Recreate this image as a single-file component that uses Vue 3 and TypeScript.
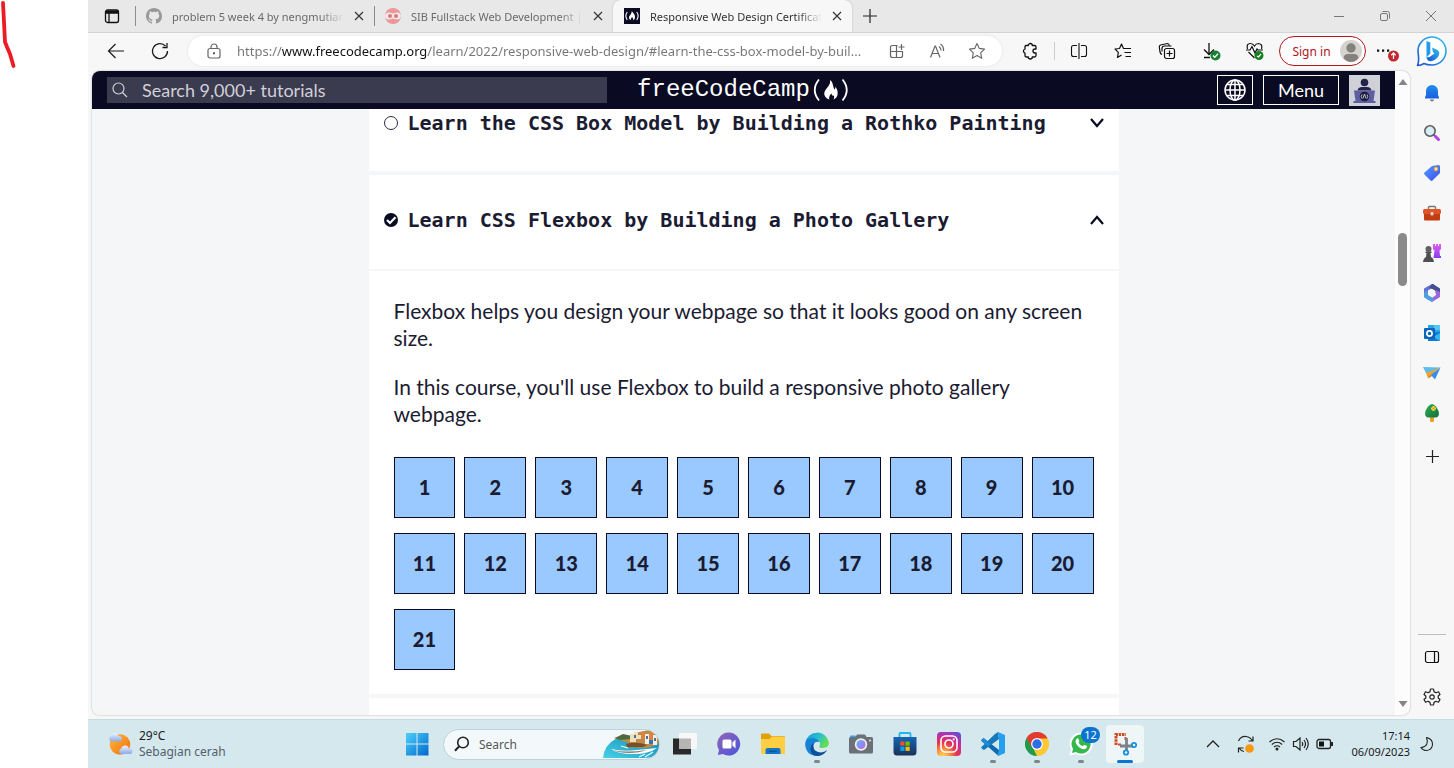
<script setup lang="ts">
import { ref } from 'vue'

interface Tab {
  title: string
  icon: 'github' | 'sib' | 'fcc'
}

const tabs: Tab[] = [
  { title: 'problem 5 week 4 by nengmutiar', icon: 'github' },
  { title: 'SIB Fullstack Web Development |', icon: 'sib' },
  { title: 'Responsive Web Design Certificat', icon: 'fcc' },
]
const activeTab = ref(2)
const address = ref(
  'https://www.freecodecamp.org/learn/2022/responsive-web-design/#learn-the-css-box-model-by-buil...',
)
const query = ref('')
const taskQuery = ref('')
const steps: number[] = Array.from({ length: 21 }, (_, i) => i + 1)
</script>

<template>
  <div class="desktop">
    <div class="canvas" aria-hidden="true">
      <svg width="20" height="72" viewBox="0 0 20 72" fill="none" stroke="#ed1c24" stroke-width="3.8" stroke-linecap="round" stroke-linejoin="round">
        <path d="M3 3L4 22L5 42L7 47L10 54L13.500 66" />
      </svg>
    </div>

    <div class="screen">
      <div class="tabbar">
        <button class="workspaces" aria-label="Tab actions">
          <svg width="16" height="16" viewBox="0 0 16 16" fill="none" stroke="#111" stroke-width="1.3">
            <rect x="1.500" y="2" width="13" height="12.500" rx="2" />
            <path d="M2 3.700H14M2 4.500H14" stroke-width="2.400" />
            <path d="M5 5V14" />
          </svg>
        </button>
        <div v-for="(tab, i) in tabs" :key="tab.title" class="tab" :class="{ active: i === activeTab }">
          <button class="tab-main" @click="activeTab = i">
            <svg v-if="tab.icon === 'github'" width="16" height="16" viewBox="0 0 16 16" fill="#999">
              <path d="M8 0C3.580 0 0 3.580 0 8c0 3.540 2.290 6.530 5.470 7.590.4.070.55-.17.55-.38v-1.490c-2.010.37-2.530-.49-2.690-.94-.09-.23-.48-.94-.82-1.130-.28-.15-.68-.52-.01-.53.63-.01 1.080.58 1.230.82.72 1.210 1.870.87 2.330.66.07-.52.28-.87.51-1.070-1.780-.2-3.640-.89-3.640-3.950 0-.87.31-1.590.82-2.150-.08-.2-.36-1.020.08-2.120 0 0 .67-.21 2.200.82a7.600 7.600 0 0 1 4 0c1.530-1.040 2.200-.82 2.200-.82.44 1.100.16 1.920.08 2.120.51.56.82 1.270.82 2.150 0 3.070-1.870 3.750-3.650 3.950.29.25.54.73.54 1.480v2.200c0 .21.15.46.55.38A8 8 0 0 0 16 8c0-4.420-3.580-8-8-8z" />
            </svg>
            <svg v-else-if="tab.icon === 'sib'" width="16" height="16" viewBox="0 0 16 16">
              <circle cx="8" cy="8" r="8" fill="#e9979a" />
              <path d="M0 8a4 4 0 0 1 4-3.600c2.400 0 2.600 1 4 1s1.600-1 4-1a4 4 0 0 1 4 3.600a4 4 0 0 1-4 3.600c-2.400 0-2.600-1-4-1s-1.600 1-4 1A4 4 0 0 1 0 8z" fill="#f6e8e8" />
              <circle cx="5" cy="8" r="2" fill="#dd777b" />
              <circle cx="11" cy="8" r="2" fill="#dd777b" />
            </svg>
            <svg v-else width="16" height="16" viewBox="0 0 16 16">
              <rect width="16" height="16" fill="#0a0a23" />
              <path d="M3.300 4Q.4 8 3.300 12M12.700 4Q15.600 8 12.700 12" fill="none" stroke="#fff" stroke-width="1.100" />
              <path d="M7.800 3C9 5 11.200 6.500 11 9.200C10.900 11 10.200 11.800 9.200 12.300C9.600 11 9 9.800 8 9.300C7.300 10 6.500 11 7 12.300C5.300 11.700 4.600 10.200 5.200 8.600C5.800 7 8 5.800 7.800 3Z" fill="#fff" />
            </svg>
            <span class="tab-title">{{ tab.title }}</span>
          </button>
          <button class="tab-close" aria-label="Close tab">
            <svg width="10" height="10" viewBox="0 0 10 10" stroke="#333" stroke-width="1.200"><path d="M1 1L9 9M9 1L1 9" /></svg>
          </button>
        </div>
        <button class="new-tab" aria-label="New tab">
          <svg width="14" height="14" viewBox="0 0 14 14" stroke="#222" stroke-width="1.200"><path d="M7 0V14M0 7H14" /></svg>
        </button>
        <div class="window-controls">
          <button aria-label="Minimize"><svg width="12" height="12" viewBox="0 0 12 12" stroke="#777"><path d="M1 6.500H11" /></svg></button>
          <button aria-label="Restore">
            <svg width="12" height="12" viewBox="0 0 12 12" fill="none" stroke="#777">
              <rect x="1.500" y="3.500" width="7" height="7" rx="1.500" /><path d="M3.500 1.500H8.500Q10.500 1.500 10.500 3.500V8.500" />
            </svg>
          </button>
          <button aria-label="Close"><svg width="12" height="12" viewBox="0 0 12 12" stroke="#777"><path d="M1 1L11 11M11 1L1 11" /></svg></button>
        </div>
      </div>

      <div class="toolbar">
        <button class="tool" aria-label="Back">
          <svg width="18" height="18" viewBox="0 0 18 18" fill="none" stroke="#1b1b1b" stroke-width="1.200"><path d="M17 9H1.500M8.500 2L1.500 9L8.500 16" /></svg>
        </button>
        <button class="tool" aria-label="Reload">
          <svg width="18" height="18" viewBox="0 0 18 18" fill="none" stroke="#1b1b1b" stroke-width="1.300"><path d="M16.500 9A7.500 7.500 0 1 1 14.500 4M16 1V5.500H11.500" /></svg>
        </button>
        <div class="address">
          <svg class="lock" width="14" height="16" viewBox="0 0 14 16" fill="none" stroke="#666" stroke-width="1.200">
            <rect x="1" y="5.500" width="12" height="9.500" rx="2" /><path d="M4 5.500V4A3 3 0 0 1 10 4V5.500" /><circle cx="7" cy="10.300" r=".6" fill="#666" />
          </svg>
          <input v-model="address" class="url" type="text" aria-label="Address" />
          <button class="tool" aria-label="App available">
            <svg width="16" height="16" viewBox="0 0 16 16" fill="none" stroke="#666" stroke-width="1.200">
              <path d="M8.500 2.500H3.500Q1.500 2.500 1.500 4.500V12.500Q1.500 14.500 3.500 14.500H11.500Q13.500 14.500 13.500 12.500V8.500H1.500M7.500 2.500V14.500M12.500 1V7M9.500 4H15.500" />
            </svg>
          </button>
          <button class="tool" aria-label="Read aloud">
            <svg width="18" height="16" viewBox="0 0 18 16" fill="none" stroke="#666" stroke-width="1.200">
              <path d="M2.500 14.500L7 3H7.500L12 14.500M4 10.500H10.500M11 3.500Q13 5 13 7.500M12.500 1Q16 3.500 15.500 8" />
            </svg>
          </button>
          <button class="tool" aria-label="Add to favorites">
            <svg width="18" height="18" viewBox="0 0 18 18" fill="none" stroke="#666" stroke-width="1.100" stroke-linejoin="round">
              <path d="M9 1.500L11.300 6.400L16.500 7.100L12.700 10.800L13.700 16.200L9 13.600L4.300 16.200L5.300 10.800L1.500 7.100L6.700 6.400Z" />
            </svg>
          </button>
        </div>
        <button class="tool" aria-label="Extensions">
          <svg width="18" height="18" viewBox="0 0 18 18" fill="none" stroke="#111" stroke-width="1.300" stroke-linejoin="round">
            <path d="M5 3.500H7.300A2 2 0 0 1 11.300 3.500H13.500Q15 3.500 15 5V7H14A2 2 0 0 0 14 11H15V13.500Q15 15 13.500 15H11.300A2 2 0 0 1 7.300 15H5.500Q4 15 4 13.500V11.200A2.200 2.200 0 0 1 4 7V5Q4 3.500 5 3.500Z" />
          </svg>
        </button>
        <span class="tool-divider"></span>
        <button class="tool" aria-label="Split screen">
          <svg width="18" height="16" viewBox="0 0 18 16" fill="none" stroke="#111" stroke-width="1.100">
            <path d="M7 2.500H3.500Q1.500 2.500 1.500 4.500V11.500Q1.500 13.500 3.500 13.500H7M11 2.500H14.500Q16.500 2.500 16.500 4.500V11.500Q16.500 13.500 14.500 13.500H11M9 0V16" />
          </svg>
        </button>
        <button class="tool" aria-label="Favorites">
          <svg width="18" height="18" viewBox="0 0 18 18" fill="none" stroke="#111" stroke-width="1.200" stroke-linejoin="round">
            <path d="M12.500 6.500H9.500L7.500 2L5.500 6.500L1 7L4.300 10.300L3.500 15.500L7.500 13M11 6.500H17M10.500 10.500H17M11.500 14.500H17" />
          </svg>
        </button>
        <button class="tool" aria-label="Collections">
          <svg width="18" height="18" viewBox="0 0 18 18" fill="none" stroke="#111" stroke-width="1.200">
            <rect x="6.500" y="6.500" width="10" height="10" rx="2" /><path d="M11.500 8.500V14.500M8.500 11.500H14.500M4 12.500Q2.500 12 2 10L1.300 5Q1.200 3.500 2.500 3L9.500 1.500Q11 1.500 11.500 4M4 9.500V6.500Q4 4 6.500 4H13.500" />
          </svg>
        </button>
        <button class="tool" aria-label="Downloads">
          <svg width="20" height="20" viewBox="0 0 20 20" fill="none" stroke="#111" stroke-width="1.300">
            <path d="M8 2V13M3 8.500L8 13.500L13 8.500M3 16.500H9" /><circle cx="14.500" cy="14.500" r="5" fill="#1a7f37" stroke="none" /><path d="M12 14.500L13.800 16.300L17 12.800" stroke="#fff" />
          </svg>
        </button>
        <button class="tool" aria-label="Browser essentials">
          <svg width="20" height="20" viewBox="0 0 20 20" fill="none" stroke="#111" stroke-width="1.200">
            <path d="M2.500 8Q1 2.500 5.500 2.500Q8 2.500 9.500 5Q11 2.500 13.500 2.500Q18 3 16.500 8M1 9H5L7 5.500L10 12L12 8L13 9H18M3.500 11L9.500 17" />
            <circle cx="14" cy="14.500" r="4.500" fill="#168020" stroke="none" /><path d="M12 15L13.500 16L16 13" stroke="#fff" />
          </svg>
        </button>
        <button class="sign-in">
          <span>Sign in</span>
          <svg width="22" height="22" viewBox="0 0 22 22">
            <circle cx="11" cy="11" r="11" fill="#d5d3cf" /><circle cx="11" cy="8" r="4.700" fill="#85827e" /><path d="M3.500 18Q4 14 8 14H14Q18 14 18.500 18Q15.500 22 11 22T3.500 18Z" fill="#85827e" />
          </svg>
        </button>
        <button class="tool" aria-label="Settings and more">
          <svg width="22" height="22" viewBox="0 0 22 22">
            <path d="M0 9.500h2.200v2.200H0zM5 9.500h2.200v2.200H5zM10 9.500h2.200v2.200H10z" fill="#111" /><circle cx="16.500" cy="16" r="5.500" fill="#c4262e" /><path d="M16.500 19V13.300M14.300 15.300L16.500 13L18.700 15.300" fill="none" stroke="#fff" stroke-width="1.300" />
          </svg>
        </button>
        <button class="tool" aria-label="Discover">
          <svg width="32" height="32" viewBox="0 0 32 32">
            <defs><linearGradient id="bing" x1="0" y1="1" x2="1" y2="0"><stop offset="0" stop-color="#1b4fd0" /><stop offset="1" stop-color="#2fc4ee" /></linearGradient></defs>
            <path d="M1.500 30.500Q3.500 26 2 17A14 14 0 1 1 16 30Q11 30 8 28.500Q5 30.500 1.500 30.500Z" fill="#fff" stroke="url(#bing)" stroke-width="1.600" stroke-linejoin="round" />
            <path d="M10.500 6L14.300 7.500V18.500L10.500 22.500Z" fill="#1e9bea" />
            <path d="M16 12.500L21.500 15Q24 16.500 23 20Q21.500 24 16 26Q11 27 10.500 22Q13 23 17 19.500L18.500 18.500L17 17Z" fill="url(#bing)" />
          </svg>
        </button>
      </div>

      <div class="browser-body">
        <div class="viewport">
          <main class="page">
            <header class="site-header">
              <label class="site-search">
                <svg width="16" height="16" viewBox="0 0 16 16" fill="none" stroke="#d0d0d5" stroke-width="1.200"><circle cx="6.500" cy="6.500" r="5.500" /><path d="M10.500 10.500L15 15" /></svg>
                <input v-model="query" type="text" placeholder="Search 9,000+ tutorials" aria-label="Search 9,000+ tutorials" />
              </label>
              <a class="logo" href="#learn" aria-label="freeCodeCamp">
                <span>freeCodeCamp</span>
                <svg width="40" height="26" viewBox="0 0 40 26">
                  <path d="M9 2.500Q.5 13 9 23.500M32.500 2.500Q41 13 32.500 23.500" fill="none" stroke="#fff" stroke-width="1.800" />
                  <path d="M20 3C23.500 5.500 22.500 9 24.500 12.500C25.300 11.800 25.500 10.500 25 9.500C27.500 12 28 15 27.500 18C27 20 25.500 22 23.500 22.500C24.500 20.500 24.300 18.500 23 18.500C22 18.800 21.800 18 21.500 16.500C20 17.500 18.500 20 19.300 22.500C16 21.500 13.500 18.500 14.500 15C15.500 11.500 21 8.500 20 3Z" fill="#fff" />
                </svg>
              </a>
              <div class="site-actions">
                <button class="globe" aria-label="Change language">
                  <svg width="22" height="22" viewBox="0 0 22 22" fill="none" stroke="#fff" stroke-width="1.500"><circle cx="11" cy="11" r="10" /><ellipse cx="11" cy="11" rx="5" ry="10" /><path d="M11 1V21M1 11H21M3 5.500H19M3 16.500H19" /></svg>
                </button>
                <button class="menu">Menu</button>
                <a href="#profile" class="avatar" aria-label="Profile">
                  <svg width="31" height="31" viewBox="0 0 31 31">
                    <rect width="31" height="31" fill="#d0d0d8" /><circle cx="15.500" cy="7.500" r="3.800" fill="#24244a" /><path d="M8.500 15.500Q9 12 13 12H18Q22 12 22.500 15.500Z" fill="#24244a" /><path d="M5 15.500H26L24.500 26H26.500V28H4.500V26H6.500Z" fill="#5e5ea2" /><circle cx="15.500" cy="21.500" r="4.800" fill="#1c1c3c" /><path d="M13 19.500Q11.500 21.500 13 23.500M18 19.500Q19.500 21.500 18 23.500M15.500 19L14 23.500M15.500 19L17 23.500" fill="none" stroke="#d0d0d8" stroke-width=".9" />
                  </svg>
                </a>
              </div>
            </header>

            <div class="curriculum">
              <section class="block">
                <h3>
                  <button class="block-toggle cut">
                    <svg width="14" height="14" viewBox="0 0 14 14" fill="#fff" stroke="#2a2a40"><circle cx="7" cy="7" r="6.500" /></svg>
                    <span>Learn the CSS Box Model by Building a Rothko Painting</span>
                    <svg width="14" height="10" viewBox="0 0 14 10" fill="none" stroke="#0a0a23" stroke-width="2.200"><path d="M1 1L7 8L13 1" /></svg>
                  </button>
                </h3>
              </section>
              <section class="block">
                <h3>
                  <button class="block-toggle" aria-expanded="true">
                    <svg width="14" height="14" viewBox="0 0 14 14"><circle cx="7" cy="7" r="7" fill="#0a0a23" /><path d="M3 7L6 10L11.500 4.300" fill="none" stroke="#fff" stroke-width="2.200" /></svg>
                    <span>Learn CSS Flexbox by Building a Photo Gallery</span>
                    <svg width="14" height="10" viewBox="0 0 14 10" fill="none" stroke="#0a0a23" stroke-width="2.200"><path d="M1 9L7 2L13 9" /></svg>
                  </button>
                </h3>
                <div class="block-body">
                  <p>Flexbox helps you design your webpage so that it looks good on any screen size.</p>
                  <p>In this course, you'll use Flexbox to build a responsive photo gallery webpage.</p>
                  <nav class="steps" aria-label="Steps">
                    <a v-for="n in steps" :key="n" :href="`#step-${n}`">{{ n }}</a>
                  </nav>
                </div>
              </section>
              <section class="block rest"></section>
            </div>
          </main>
          <div class="scrollbar" aria-hidden="true">
            <svg width="10" height="8" viewBox="0 0 10 8" fill="#858585"><path d="M5 1L9.500 7H.5Z" /></svg>
            <span class="track"><span class="thumb"></span></span>
            <svg width="10" height="8" viewBox="0 0 10 8" fill="#858585"><path d="M5 7L9.500 1H.5Z" /></svg>
          </div>
        </div>

        <aside class="sidebar">
          <svg width="0" height="0" class="defs" aria-hidden="true">
            <defs>
              <linearGradient id="tag" x1="0" y1="0" x2="1" y2="1"><stop offset="0" stop-color="#4fa0ff" /><stop offset="1" stop-color="#3f4cf0" /></linearGradient>
              <linearGradient id="rook" x1="0" y1="0" x2="0" y2="1"><stop offset="0" stop-color="#e05cf5" /><stop offset="1" stop-color="#8b3df0" /></linearGradient>
              <linearGradient id="belly" x1="0" y1="0" x2="0" y2="1"><stop offset="0" stop-color="#1f8fea" /><stop offset="1" stop-color="#1c5ee0" /></linearGradient>
              <linearGradient id="tree" x1="0" y1="0" x2="1" y2="1"><stop offset="0" stop-color="#2fae4c" /><stop offset="1" stop-color="#0d7040" /></linearGradient>
            </defs>
          </svg>
          <button aria-label="Notifications">
            <svg width="18" height="18" viewBox="0 0 18 18"><path d="M7 15.500H11Q11 17.500 9 17.500T7 15.500Z" fill="#777" /><path d="M9 1A6 6 0 0 1 15 7V11L16 13.500V14.500H2V13.500L3 11V7A6 6 0 0 1 9 1Z" fill="url(#belly)" /></svg>
          </button>
          <button aria-label="Search">
            <svg width="18" height="18" viewBox="0 0 18 18"><path d="M10.500 10.500L12.500 12.500" stroke="#666" stroke-width="2" /><path d="M12.500 12.500L15.500 15.500" stroke="#b83df0" stroke-width="3" stroke-linecap="round" /><circle cx="7" cy="7" r="5.200" fill="#d4eefa" stroke="#5e5e5e" stroke-width="1.600" /></svg>
          </button>
          <button aria-label="Shopping">
            <svg width="18" height="18" viewBox="0 0 18 18"><path d="M9 2L15.500 1Q17 1 17 2.500V9L9.500 16.500Q8.500 17.300 7.500 16.500L1.500 10.500Q.7 9.500 1.500 8.500Z" fill="url(#tag)" /><circle cx="13" cy="5" r="1.900" fill="#ffe79a" stroke="#e5a72c" /></svg>
          </button>
          <button aria-label="Tools">
            <svg width="20" height="18" viewBox="0 0 20 18"><path d="M6.500 5V3.500Q6.500 2.500 7.500 2.500H12.500Q13.500 2.500 13.500 3.500V5" fill="none" stroke="#777" stroke-width="1.400" /><rect x="2" y="8" width="16" height="8.500" rx="1" fill="#c13c12" /><rect x="1" y="5" width="18" height="5" rx="1.500" fill="#df5420" /><rect x="8.500" y="8" width="3" height="3.500" rx="1" fill="#d3d3d3" /></svg>
          </button>
          <button aria-label="Games">
            <svg width="20" height="20" viewBox="0 0 20 20"><path d="M11 1H13V3H14V1H16V3H17V1H19V6L17.500 7.500L18 13H19V15H11.500L12.500 7.500L11 6Z" fill="url(#rook)" /><circle cx="6.500" cy="6" r="3" fill="#606060" /><path d="M3.500 8.500H9.500V10H8.500L9 14Q11.500 15 12 19H1Q1.500 15 4 14L4.500 10H3.500Z" fill="#505050" /></svg>
          </button>
          <button aria-label="Microsoft 365">
            <svg width="18" height="18" viewBox="0 0 18 18"><path d="M9 0L1 4.500V13L5 15.500V6.500L11 3V0Z" fill="#6570d8" /><path d="M10 0L17 4.500V12L12 9V6.500L6 3.500L9 0Z" fill="#435091" /><path d="M17 8V13L9 18L3 14.500L9 14L13 11V6L17 8Z" fill="#9e65dc" /><path d="M1 9V13L9 18L11 14.500L5 11V6Z" fill="#48a0dc" /><path d="M9 5L12.500 7V11L9 13L5.500 11V7Z" fill="#f7f7f7" /></svg>
          </button>
          <button aria-label="Outlook">
            <svg width="18" height="18" viewBox="0 0 18 18"><path d="M5 1H17V12H5Z" fill="#29a5ea" /><path d="M11 1H17V6H11Z" fill="#56c6f4" /><path d="M5 9L17 8V16Q17 17 16 17H5Z" fill="#1376d1" /><path d="M17 9V17L10 13Z" fill="#35b8f1" /><rect x="1" y="4" width="11" height="11" rx="1" fill="#0867bd" /><circle cx="6.500" cy="9.500" r="2.600" fill="none" stroke="#fff" stroke-width="1.700" /></svg>
          </button>
          <button aria-label="Drop">
            <svg width="18" height="18" viewBox="0 0 18 18"><path d="M0 3L17.500 3.500L7 9.500L3 9Z" fill="#5dbbed" /><path d="M17.500 3.500L12 15.500L7.500 10.500Z" fill="#3a8cee" /><path d="M3 9L17.500 3.500L7 11L5 14.500Z" fill="#f0a52a" /><path d="M5 14.500L7 10.500L9 12Z" fill="#c87b11" /></svg>
          </button>
          <button aria-label="Rewards tree">
            <svg width="18" height="20" viewBox="0 0 18 20"><rect x="7" y="13" width="4" height="6" rx="1" fill="#eda029" /><path d="M9 1Q13 2 15.500 8Q17 13 13.500 14.500H4.500Q1 13 2.500 8Q5 2 9 1Z" fill="url(#tree)" /><path d="M10.500 3V8M8 5.500H13" stroke="#ffd23b" stroke-width="2.200" fill="none" /><circle cx="10.500" cy="5.500" r=".8" fill="#d98a16" /></svg>
          </button>
          <button aria-label="Customize" class="add">
            <svg width="13" height="13" viewBox="0 0 13 13" stroke="#222" stroke-width="1.200"><path d="M6.500 0V13M0 6.500H13" /></svg>
          </button>
          <div class="sidebar-foot">
            <button aria-label="Hide sidebar">
              <svg width="16" height="16" viewBox="0 0 16 16" fill="none" stroke="#111" stroke-width="1.200"><rect x="1.500" y="2.500" width="13" height="11" rx="2" /><path d="M10.500 2.500V13.500" /></svg>
            </button>
            <button aria-label="Settings">
              <svg width="18" height="18" viewBox="0 0 18 18" fill="none" stroke="#222" stroke-width="1.200" stroke-linejoin="round"><path d="M7.500 1H10.500L11 3.600L13 4.700L15.500 3.800L17 6.500L15.200 8V10L17 11.500L15.500 14.200L13 13.300L11 14.400L10.500 17H7.500L7 14.400L5 13.300L2.500 14.200L1 11.500L2.800 10V8L1 6.500L2.500 3.800L5 4.700L7 3.600Z" /><circle cx="9" cy="9" r="2.200" /></svg>
            </button>
          </div>
        </aside>
      </div>

      <footer class="taskbar">
        <button class="weather">
          <svg width="26" height="26" viewBox="0 0 26 26">
            <defs>
              <linearGradient id="sun" x1="0" y1="0" x2="1" y2="1"><stop offset="0" stop-color="#ffbd35" /><stop offset="1" stop-color="#f26a12" /></linearGradient>
              <linearGradient id="cloud" x1="0" y1="0" x2="0" y2="1"><stop offset="0" stop-color="#eef4ff" /><stop offset="1" stop-color="#8fa9e4" /></linearGradient>
            </defs>
            <circle cx="13" cy="13.500" r="10.300" fill="url(#sun)" />
            <path d="M4 10.500A3 3 0 0 1 4 5Q5 1.500 8.500 2Q11 2.500 11.500 5Q15 5 15 8Q15 10.500 12.500 10.500Z" fill="url(#cloud)" />
            <path d="M14 23A3 3 0 0 1 14 17.500Q15.500 14 19 14.500Q21.500 15 22 17.500Q25.500 17.500 25.500 20.300Q25.500 23 23 23Z" fill="url(#cloud)" />
          </svg>
          <span class="weather-text"><span>29°C</span><span class="dim">Sebagian cerah</span></span>
        </button>

        <div class="apps">
          <button class="app" aria-label="Start">
            <svg width="24" height="24" viewBox="0 0 24 24"><defs><linearGradient id="win" x1="0" y1="0" x2="1" y2="1"><stop offset="0" stop-color="#4dd0fb" /><stop offset="1" stop-color="#0068cc" /></linearGradient></defs><path d="M1 1H11.500V11.500H1ZM12.500 1H23.500V11.500H12.500ZM1 12.500H11.500V23.500H1ZM12.500 12.500H23.500V23.500H12.500Z" fill="url(#win)" /></svg>
          </button>
          <label class="task-search">
            <svg width="16" height="16" viewBox="0 0 16 16" fill="none" stroke="#222" stroke-width="1.600"><circle cx="9" cy="6.500" r="5.300" /><path d="M5 10.500L1 14.700" stroke-width="2" /></svg>
            <input v-model="taskQuery" type="text" placeholder="Search" aria-label="Search Windows" />
            <svg width="56" height="29" viewBox="0 0 56 29">
              <defs><linearGradient id="sea" x1="0" y1="1" x2="1" y2="0"><stop offset="0" stop-color="#45d2ea" /><stop offset="1" stop-color="#1485ad" /></linearGradient></defs>
              <path d="M0 28Q1 15 14 8L24 6L56 10V18Q54 28 42 28Z" fill="url(#sea)" />
              <path d="M11 8L20 5L28 6L36 2L46 0Q56 4 56 14L44 18L22 17L26 13Z" fill="#b98c4a" />
              <path d="M12 8L20 4L29 6L27 9L17 10Z" fill="#4c6a3b" />
              <path d="M27 4H31V2H35V5H38V9H33V12H27Z" fill="#f0dfb8" /><path d="M38 2H42V8H38ZM46 3H50V9H46Z" fill="#e0803f" /><path d="M42 4H46V14H42ZM50 5H54V15H50Z" fill="#f4efe4" /><path d="M31 5H33V8H31ZM43 6H45V9H43ZM51 8H53V11H51ZM46 10H50V14H46Z" fill="#426fa6" />
              <path d="M23 14Q34 11 44 15L40 17L24 17Z" fill="#7b4e27" />
              <path d="M8 19Q20 22 34 20L54 18Q46 24 30 24Q14 24 8 19Z" fill="#fff" />
              <path d="M10 20Q22 23 44 20Q36 23 26 23Q16 23 10 20Z" fill="#8f7d68" />
              <path d="M36 27L42 24M42 27L50 22M18 16L25 18" stroke="#e5ffff" stroke-width="1.200" />
            </svg>
          </label>
          <button class="app" aria-label="Task view">
            <svg width="24" height="24" viewBox="0 0 24 24"><rect x="0" y="6.500" width="18" height="16" fill="#292929" /><rect x="6" y="1" width="18" height="16" rx="1" fill="#f7f7f7" /><rect x="6" y="6.500" width="12" height="10.500" fill="#b5b5b5" /></svg>
          </button>
          <button class="app" aria-label="Chat">
            <svg width="24" height="24" viewBox="0 0 24 24"><defs><linearGradient id="chat" x1="0" y1="0" x2="1" y2="1"><stop offset="0" stop-color="#9264b6" /><stop offset="1" stop-color="#4a54dc" /></linearGradient></defs><path d="M12 .5A11.500 11.500 0 1 1 6 22L.8 23L2 18A11.500 11.500 0 0 1 12 .5Z" fill="url(#chat)" /><rect x="5.500" y="7.500" width="9" height="9" rx="1.500" fill="#fff" /><path d="M15.500 10.500L18.500 7.500V16.500L15.500 13.500Z" fill="#fff" /></svg>
          </button>
          <button class="app" aria-label="File Explorer">
            <svg width="24" height="24" viewBox="0 0 24 24"><path d="M0 2.500Q0 1.500 1 1.500H8L10.500 4H23Q24 4 24 5V12H0Z" fill="#e0a006" /><path d="M0 7H8.500L11 4.500H23Q24 4.500 24 5.500V22H1Q0 22 0 21Z" fill="#ffce42" /><path d="M4.500 22V18Q4.500 16 6.500 16H17.500Q19.500 16 19.500 18V22Z" fill="#1474c5" /><path d="M8 18.700H16V19.800H8Z" fill="#0a4d91" /></svg>
          </button>
          <button class="app running" aria-label="Edge">
            <svg width="24" height="24" viewBox="0 0 24 24"><defs><linearGradient id="edgeA" x1="0" y1="0" x2="1" y2=".5"><stop offset="0" stop-color="#1597e0" /><stop offset=".6" stop-color="#2bc3c6" /><stop offset="1" stop-color="#66de54" /></linearGradient></defs><path d="M.2 11A12 12 0 0 1 23.800 10Q24.500 16 18 16Q14 16 14.200 14.500Q16 12 14 9Q9 4 .2 11Z" fill="url(#edgeA)" /><path d="M.1 12Q1 5.500 8 6Q13 6.500 14.500 10Q10 8.500 8.500 13Q7.500 19 13.500 23.800Q1 24.500 .1 12Z" fill="#1882d6" /><path d="M8.500 11Q7 18 13 20Q18 21.500 22.200 18Q18.500 24 12 24Q5 23 5.500 16Q6 12.500 8.500 11Z" fill="#0c4f9a" /></svg>
          </button>
          <button class="app" aria-label="Camera">
            <svg width="24" height="24" viewBox="0 0 24 24"><defs><linearGradient id="lens" x1="0" y1="0" x2="1" y2="1"><stop offset="0" stop-color="#57bdfa" /><stop offset="1" stop-color="#c25fe9" /></linearGradient></defs><rect x="1" y="3.500" width="6" height="4" rx="1" fill="#27a9ec" /><path d="M6.500 5L8 2.500H16L17.500 5H22.500Q24 5 24 6.500V20Q24 21.500 22.500 21.500H1.500Q0 21.500 0 20V6.500Q0 5 1.500 5Z" fill="#6b7076" /><circle cx="12" cy="12.500" r="6.200" fill="#eee" /><circle cx="12" cy="12.500" r="4.500" fill="url(#lens)" /><circle cx="21" cy="8.500" r="1.100" fill="#ddd" /></svg>
          </button>
          <button class="app" aria-label="Microsoft Store">
            <svg width="24" height="24" viewBox="0 0 24 24"><defs><linearGradient id="store" x1="0" y1="0" x2="0" y2="1"><stop offset="0" stop-color="#1466b8" /><stop offset="1" stop-color="#1b3158" /></linearGradient></defs><path d="M6.500 6V2Q6.500 1 7.500 1H16.500Q17.500 1 17.500 2V6" fill="none" stroke="#23b5ee" stroke-width="1.800" /><path d="M.5 5H23.500V20Q23.500 23.500 20 23.500H4Q.5 23.500 .5 20Z" fill="url(#store)" /><path d="M7.300 9.500H11.500V13.700H7.300Z" fill="#f25022" /><path d="M12.500 9.500H16.700V13.700H12.500Z" fill="#7fba00" /><path d="M7.300 14.700H11.500V18.900H7.300Z" fill="#00a4ef" /><path d="M12.500 14.700H16.700V18.900H12.500Z" fill="#ffb900" /></svg>
          </button>
          <button class="app" aria-label="Instagram">
            <svg width="24" height="24" viewBox="0 0 24 24"><defs><radialGradient id="insta" cx=".25" cy="1" r="1.150"><stop offset="0" stop-color="#ffd35c" /><stop offset=".25" stop-color="#fb923a" /><stop offset=".5" stop-color="#e8334f" /><stop offset=".75" stop-color="#c22fa3" /><stop offset="1" stop-color="#5b4fd6" /></radialGradient></defs><rect width="24" height="24" rx="4" fill="url(#insta)" /><rect x="4" y="4" width="16" height="16" rx="4.500" fill="none" stroke="#fff" stroke-width="1.600" /><circle cx="12" cy="12" r="4" fill="none" stroke="#fff" stroke-width="1.700" /><circle cx="16.700" cy="7.300" r="1.100" fill="#fff" /></svg>
          </button>
          <button class="app running" aria-label="Visual Studio Code">
            <svg width="24" height="24" viewBox="0 0 24 24"><path d="M17 0L18 7L3 18Q1.500 17.500 .5 16L0 15.500L14 2Z" fill="#1479bd" /><path d="M0 8.500L2.500 6L18 18L17.500 24Z" fill="#0f6aad" /><path d="M0 8.500L2.500 6L10 12L7 15Z" fill="#1d8cd0" /><path d="M17 0L24 3V21L17.500 24L16.500 22.500L18 20V4L16.500 1.500Z" fill="#25a0f0" /></svg>
          </button>
          <button class="app running" aria-label="Chrome">
            <svg width="24" height="24" viewBox="0 0 24 24"><path d="M12 12L1.600 6A12 12 0 0 1 22.400 6Z" fill="#e33b2e" /><path d="M12 12L22.400 6A12 12 0 0 1 12 24Z" fill="#fcc934" /><path d="M12 12L12 24A12 12 0 0 1 1.600 6Z" fill="#229a4b" /><path d="M12 6H22.400Q24 9 24 12L17.200 15L12 24L9 18Z" fill="#fcc934" /><path d="M12 6.500H22.400A12 12 0 0 0 1.600 6L6.800 15Z" fill="#e33b2e" /><circle cx="12" cy="12" r="5.900" fill="#fff" /><circle cx="12" cy="12" r="4.700" fill="#2b6ee8" /></svg>
          </button>
          <button class="app running" aria-label="WhatsApp">
            <svg width="24" height="24" viewBox="0 0 24 24"><path d="M12 .5A11.500 11.500 0 1 1 6.500 22L.5 23.500L2 17.500A11.500 11.500 0 0 1 12 .5Z" fill="#fff" /><path d="M12 2.500A9.500 9.500 0 1 1 7 20L3 21L4 17A9.500 9.500 0 0 1 12 2.500Z" fill="#35b84b" /><path d="M8 6.500Q9 6 9.500 7L10.300 9Q10.500 9.700 9.500 10.500Q11 13.300 13.800 14.300L15 13Q15.500 12.600 18 14Q18 17 15 17.300Q11 17 8 13Q5 9 8 6.500Z" fill="#fff" /></svg>
            <span class="badge">12</span>
          </button>
          <button class="app current" aria-label="Snipping Tool">
            <svg width="24" height="24" viewBox="0 0 24 24" fill="none"><path d="M3 13V2.500H13" stroke="#d24a20" stroke-width="3" stroke-dasharray="2.500 .8" /><path d="M5 12.500H8M12.500 5V8" stroke="#d24a20" stroke-width="2" /><path d="M13.500 6V19M7 14H20" stroke="#7d8286" stroke-width="2.800" /><circle cx="13" cy="20.500" r="2.200" stroke="#1690dc" stroke-width="1.800" /><circle cx="21" cy="13" r="2.200" stroke="#1690dc" stroke-width="1.800" /></svg>
          </button>
        </div>

        <div class="tray">
          <button aria-label="Show hidden icons"><svg width="14" height="14" viewBox="0 0 14 14" fill="none" stroke="#222" stroke-width="1.300"><path d="M1 10L7 4L13 10" /></svg></button>
          <button class="sync" aria-label="Updates">
            <svg width="18" height="18" viewBox="0 0 18 18" fill="none" stroke="#222" stroke-width="1.200"><path d="M1.500 6Q4 1 9 1.500Q13.500 2 15.500 6M16 1.500V6H11.500M6.500 13H1.500V17.500M2 13Q4 16 7 16.500" /><circle cx="12.500" cy="13.500" r="4.300" fill="#fb970e" stroke="none" /></svg>
          </button>
          <button class="status" aria-label="Network, volume and battery">
            <svg width="18" height="16" viewBox="0 0 18 16" fill="none" stroke="#222" stroke-width="1.200"><path d="M1.500 6Q9 -.5 16.500 6M3.800 8.500Q9 4 14.200 8.500M6 11Q9 8.500 12 11" /><circle cx="9" cy="13" r="1.500" fill="#222" stroke="none" /></svg>
            <svg width="18" height="16" viewBox="0 0 18 16" fill="none" stroke="#222" stroke-width="1.200"><path d="M1.500 5.500H4L8 2V14L4 10.500H1.500ZM10 6Q11.500 8 10 10M12 4Q15 8 12 12M14 2Q18.500 8 14 14" /></svg>
            <svg width="18" height="14" viewBox="0 0 18 14" fill="none" stroke="#222" stroke-width="1.300"><rect x="1" y="2.500" width="13.500" height="9" rx="2" /><path d="M3 4.500H8V9.500H3Z" fill="#111" stroke="none" /><path d="M16 5V9" stroke-width="2" /></svg>
          </button>
          <button class="clock"><span>17:14</span><span>06/09/2023</span></button>
          <button aria-label="Focus"><svg width="14" height="16" viewBox="0 0 14 16" fill="none" stroke="#222" stroke-width="1.100" stroke-linejoin="round"><path d="M6.500 1.500Q13 3 12.500 9Q11.500 14.500 6 14.500Q2.500 14.300 1 11.500Q5.500 11 6.800 8Q8 5 6.500 1.500Z" /></svg></button>
        </div>
      </footer>
    </div>
  </div>
</template>

<style>
html,
body {
  margin: 0;
  background: #fff;
}
</style>

<style scoped>
.desktop {
  display: flex;
  height: 100vh;
  overflow: hidden;
  font-family: 'Noto Sans', 'Open Sans', sans-serif;
  color: #1b1b1b;
}
.desktop * {
  box-sizing: border-box;
}
button,
input {
  margin: 0;
  padding: 0;
  border: 0;
  background: none;
  color: inherit;
  font: inherit;
}
button {
  display: flex;
  align-items: center;
  justify-content: center;
}
svg {
  display: block;
  flex: none;
}
input:focus {
  outline: none;
}
.canvas {
  flex: 0 0 88px;
  background: #fff;
}
.screen {
  flex: 1;
  min-width: 0;
  display: flex;
  flex-direction: column;
  background: #f7f7f7;
}

/* Tab strip */
.tabbar {
  flex: 0 0 32px;
  display: flex;
  background: #e8e8e8;
  border-bottom: 1px solid #d3d3d3;
}
.workspaces {
  width: 47px;
}
.tab {
  position: relative;
  flex: 0 1 239px;
  min-width: 0;
  display: flex;
  align-items: center;
  color: #6a6a6a;
  font-size: 11px;
}
.tab::before {
  content: '';
  width: 1px;
  height: 20px;
  background: #8c8c8c;
}
.tab-main {
  flex: 1;
  min-width: 0;
  justify-content: flex-start;
  gap: 10px;
  padding-left: 10px;
}
.tab-title {
  flex: 1;
  overflow: hidden;
  white-space: nowrap;
  text-align: left;
  mask-image: linear-gradient(to right, #000 calc(100% - 24px), transparent);
}
.tab-close {
  width: 30px;
  height: 24px;
}
.tab.active {
  height: 32px;
  background: #f7f7f7;
  border-radius: 8px 8px 0 0;
  color: #333;
  box-shadow: 0 0 2px #b5b5b5;
  clip-path: inset(-2px -2px 0 -2px);
}
.tab.active::before {
  background: transparent;
}
.new-tab {
  width: 36px;
}
.window-controls {
  margin-left: auto;
  display: flex;
}
.window-controls button {
  width: 46px;
}

/* Toolbar */
.toolbar {
  flex: 0 0 38px;
  display: flex;
  align-items: center;
  padding: 0 0 2px 6px;
}
.tool {
  flex: none;
  width: 44px;
  height: 30px;
}
.address {
  flex: 1;
  min-width: 0;
  display: flex;
  align-items: center;
  height: 30px;
  margin: 0 6px;
  padding: 0 5px 0 19px;
  background: #fff;
  border-radius: 15px;
  box-shadow: 0 0 3px #e0e0e0;
}
.address .tool {
  width: 40px;
}
.url {
  flex: 1;
  min-width: 0;
  margin-left: 16px;
  font-size: 13px;
  color: #757575;
  background: linear-gradient(to right, #757575 45px, #111 45px, #111 189px, #757575 189px);
  background-clip: text;
  -webkit-text-fill-color: transparent;
}
.tool-divider {
  width: 1px;
  height: 18px;
  margin: 0 2px;
  background: #cdcdcd;
}
.sign-in {
  flex: none;
  width: 87px;
  height: 30px;
  margin-left: 2px;
  gap: 9px;
  padding-left: 9px;
  border: 1px solid #b3161b;
  border-radius: 15px;
  color: #b3161b;
  font-size: 12px;
  background: #fdfdfd;
}

/* Browser body */
.browser-body {
  flex: 1;
  min-height: 0;
  display: flex;
  padding-left: 4px;
}
.viewport {
  flex: 1;
  min-width: 0;
  display: flex;
  margin-bottom: 4px;
  overflow: hidden;
  background: #fcfcfc;
  border-radius: 8px;
  box-shadow: 0 0 2px #a9a9a9;
}
.page {
  flex: 1;
  min-width: 0;
  display: flex;
  flex-direction: column;
  background: #f5f6f7;
  font-family: Lato, sans-serif;
  color: #1b1b32;
}
.site-header {
  flex: 0 0 38px;
  display: grid;
  grid-template-columns: 1fr auto 1fr;
  align-items: center;
  padding: 0 15px;
  background: #0a0a23;
  color: #fff;
}
.site-search {
  display: flex;
  align-items: center;
  width: 100%;
  max-width: 500px;
  height: 26px;
  padding-left: 5px;
  background: #3b3b4f;
  color: #d0d0d5;
}
.site-search input {
  flex: 1;
  min-width: 0;
  margin-left: 14px;
  font-size: 18px;
}
.site-search input::placeholder {
  color: #d0d0d5;
  opacity: 1;
}
.logo {
  display: flex;
  align-items: center;
  color: #fff;
  text-decoration: none;
  font-family: 'Liberation Mono', monospace;
  font-size: 24px;
  line-height: 26px;
}
.site-actions {
  display: flex;
  justify-content: flex-end;
  align-items: center;
  gap: 10px;
}
.globe,
.menu {
  height: 30px;
  border: 1px solid #fff;
}
.globe {
  width: 36px;
}
.menu {
  width: 76px;
  font-size: 18px;
}

/* Curriculum */
.curriculum {
  flex: 1;
  min-height: 0;
  width: 100%;
  max-width: 750px;
  margin: 0 auto;
  display: flex;
  flex-direction: column;
  gap: 4px;
}
.block {
  background: #fff;
}
.rest {
  flex: 1;
}
h3 {
  margin: 0;
}
.block-toggle {
  width: 100%;
  height: 94px;
  gap: 10px;
  padding: 0 15px 4px;
  color: #1b1b32;
  font-family: 'DejaVu Sans Mono', monospace;
  font-size: 20px;
  font-weight: 700;
  line-height: 24px;
  white-space: nowrap;
}
.block-toggle span {
  flex: 1;
  text-align: left;
}
.block-toggle.cut {
  height: 62px;
  padding-bottom: 35px;
}
.block-body {
  padding: 26px 25px 24px;
  border-top: 2px solid #f5f6f7;
}
.block-body p {
  margin: 0 0 22px;
  font-size: 21px;
  line-height: 27px;
}
.steps {
  display: grid;
  grid-template-columns: repeat(10, 1fr);
  gap: 15px 9px;
  padding-top: 8px;
}
.steps a {
  display: flex;
  align-items: center;
  justify-content: center;
  height: 61px;
  padding-bottom: 2px;
  border: 1px solid #0a0a23;
  background: #99c9ff;
  color: #1b1b32;
  font-size: 20px;
  font-weight: 900;
  text-decoration: none;
}

/* Scrollbar */
.scrollbar {
  flex: 0 0 15px;
  display: flex;
  flex-direction: column;
  align-items: center;
  padding: 7px 0;
}
.track {
  flex: 1;
  display: flex;
  justify-content: center;
  padding-top: 147px;
}
.thumb {
  width: 9px;
  height: 53px;
  border-radius: 5px;
  background: #8a8a8a;
}

/* Sidebar */
.sidebar {
  flex: 0 0 44px;
  display: flex;
  flex-direction: column;
  align-items: center;
  padding: 2px 0;
}
.defs {
  position: absolute;
}
.sidebar button {
  width: 44px;
  height: 40px;
}
.sidebar .add {
  height: 46px;
}
.sidebar-foot {
  margin-top: auto;
  padding-top: 2px;
  border-top: 1px solid #bdbdbd;
  display: flex;
  flex-direction: column;
  align-items: center;
  width: 28px;
}

/* Taskbar */
.taskbar {
  flex: 0 0 48px;
  display: grid;
  grid-template-columns: 1fr auto 1fr;
  align-items: center;
  background: #d5e8ee;
  border-top: 1px solid #c5dce3;
  font-size: 12px;
}
.weather {
  justify-self: start;
  gap: 6px;
  padding-left: 19px;
}
.weather-text {
  display: flex;
  flex-direction: column;
  align-items: flex-start;
  line-height: 16px;
}
.dim {
  color: #52606a;
}
.apps {
  display: flex;
  align-items: center;
}
.app {
  position: relative;
  width: 44px;
  height: 48px;
}
.task-search {
  display: flex;
  align-items: center;
  width: 217px;
  height: 31px;
  margin: 0 3px 0 4px;
  padding-left: 10px;
  border: 1px solid #bdd2da;
  border-radius: 16px;
  background: #f3f9fb;
  overflow: hidden;
}
.task-search input {
  flex: 1;
  min-width: 0;
  margin-left: 9px;
}
.task-search input::placeholder {
  color: #555;
  opacity: 1;
}
.running::after,
.current::after {
  content: '';
  position: absolute;
  bottom: 5px;
  width: 6px;
  height: 3px;
  border-radius: 2px;
  background: #7c868a;
}
.current::before {
  content: '';
  position: absolute;
  z-index: 0;
  top: 5px;
  left: 3px;
  right: 3px;
  bottom: 5px;
  border-radius: 4px;
  background: #eef6f8;
}
.current svg {
  position: relative;
}
.current::after {
  width: 16px;
  background: #0a74d0;
}
.badge {
  position: absolute;
  top: 7px;
  right: 3px;
  width: 19px;
  height: 16px;
  border-radius: 8px;
  background: #0a74d0;
  color: #fff;
  font-size: 11px;
  line-height: 16px;
  text-align: center;
}
.tray {
  justify-self: end;
  display: flex;
  align-items: center;
  padding-right: 20px;
}
.sync {
  margin: 0 13px 0 17px;
}
.status {
  gap: 6px;
  margin-right: 17px;
}
.clock {
  flex-direction: column;
  align-items: flex-end;
  margin-right: 10px;
  line-height: 16px;
  font-size: 11px;
}
</style>
